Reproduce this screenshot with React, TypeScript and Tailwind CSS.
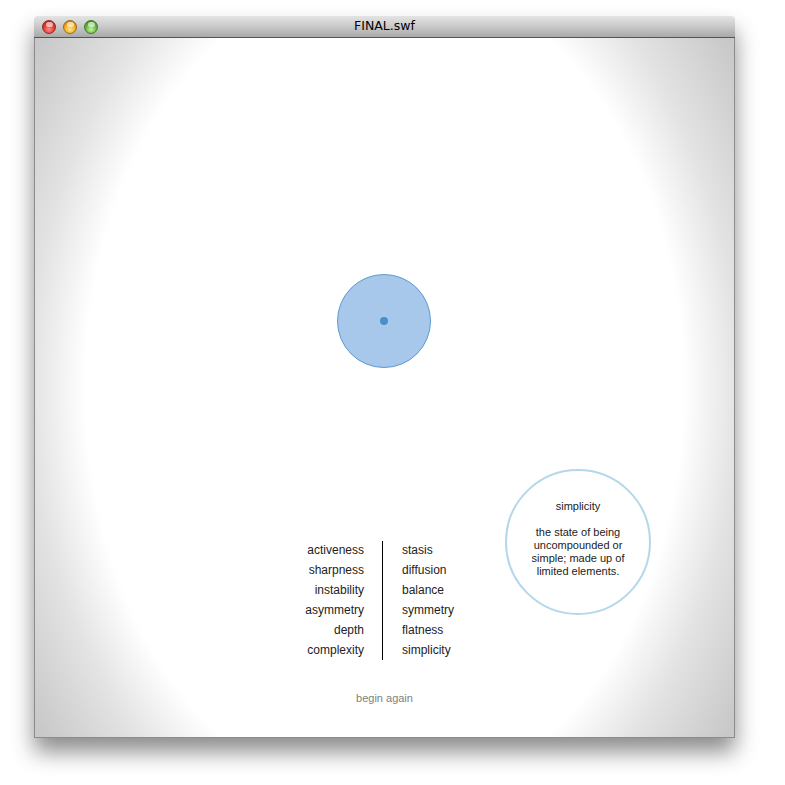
const leftWords = ['activeness', 'sharpness', 'instability', 'asymmetry', 'depth', 'complexity'];
const rightWords = ['stasis', 'diffusion', 'balance', 'symmetry', 'flatness', 'simplicity'];

function TrafficLight({tone}: {tone: 'red' | 'yellow' | 'green'}) {
  const fill =
    tone === 'red'
      ? 'bg-[radial-gradient(circle_at_50%_70%,#ff8a80_0%,#e0352b_55%,#9b1510_100%)] border-[#8a2a25]'
      : tone === 'yellow'
        ? 'bg-[radial-gradient(circle_at_50%_70%,#ffe58a_0%,#f2a81d_55%,#a8680a_100%)] border-[#9a6a1a]'
        : 'bg-[radial-gradient(circle_at_50%_70%,#c6f59a_0%,#5fb437_55%,#2f6e17_100%)] border-[#3f7a2a]';
  return (
    <span className={`relative block h-[14px] w-[14px] rounded-full border ${fill}`}>
      <span className="absolute left-[3px] top-[1px] h-[5px] w-[7px] rounded-full bg-white/60" />
    </span>
  );
}

export default function App() {
  return (
    <div className="min-h-[785px] w-[785px] bg-white pl-[34px] pt-[16px]">
      <div className="w-[701px] rounded-t-[4px] shadow-[0_14px_22px_rgba(0,0,0,0.45)]">
        {/* title bar */}
        <div className="relative flex h-[22px] items-center rounded-t-[4px] border-b border-[#555] bg-[linear-gradient(#e4e4e4,#c9c9c9_50%,#a9a9a9)] px-[8px]">
          <div className="flex gap-[7px]">
            <TrafficLight tone="red" />
            <TrafficLight tone="yellow" />
            <TrafficLight tone="green" />
          </div>
          <div className="absolute inset-0 flex items-center justify-center font-['DejaVu_Sans',sans-serif] text-[12.5px] text-black">
            FINAL.swf
          </div>
        </div>

        {/* flash stage */}
        <div className="relative h-[700px] border-x border-b border-[#8c8c8c] bg-[radial-gradient(ellipse_360px_500px_at_50%_50%,#ffffff_0%,#ffffff_83%,#e3e3e3_98%,#c8c8c8_118%)] font-['Liberation_Sans',Arial,sans-serif]">
          {/* cursor circle */}
          <div className="absolute left-[302px] top-[236px] flex h-[94px] w-[94px] items-center justify-center rounded-full border border-[#5d9bd3] bg-[#a7c8eb]">
            <span className="block h-[8px] w-[8px] rounded-full bg-[#4a90c8]" />
          </div>

          {/* word pairs */}
          <div className="absolute left-[249px] top-[502px] flex">
            <div className="w-[80px] text-right text-[12px] leading-[20px] text-[#222]">
              {leftWords.map((w) => (
                <div key={w}>{w}</div>
              ))}
            </div>
            <div className="ml-[18px] mr-[19px] mt-[1px] w-px bg-black" />
            <div className="text-[12px] leading-[20px] text-[#222]">
              {rightWords.map((w) => (
                <div key={w}>{w}</div>
              ))}
            </div>
          </div>

          {/* definition bubble */}
          <div className="absolute left-[470px] top-[431px] flex h-[146px] w-[146px] flex-col items-center rounded-full border-2 border-[#b4d7ea] pt-[29px] text-center text-[11px] leading-[13px] text-[#222]">
            <div>simplicity</div>
            <div className="mt-[13px] w-[110px]">the state of being uncompounded or simple; made up of limited elements.</div>
          </div>

          {/* restart */}
          <div className="absolute left-0 right-0 top-[653px] text-center text-[11px] leading-[14px] text-[#808080]">begin again</div>
        </div>
      </div>
    </div>
  );
}
